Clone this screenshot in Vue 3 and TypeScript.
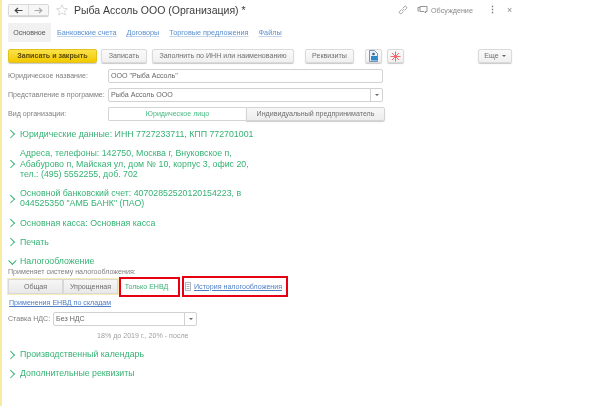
<script setup lang="ts">
const tabs: string[] = ['Банковские счета', 'Договоры', 'Торговые предложения', 'Файлы']
</script>

<template>
  <div class="page">
    <header class="head">
      <div class="nav">
        <span class="nav-btn"><svg width="9" height="7" viewBox="0 0 9 7"><path d="M8.500 3.500H1.500M4 1 1.200 3.500 4 6" fill="none" stroke="#444" stroke-width="1.200"/></svg></span>
        <span class="nav-btn"><svg width="9" height="7" viewBox="0 0 9 7"><path d="M.5 3.500h7M5 1l2.800 2.500L5 6" fill="none" stroke="#aaa" stroke-width="1.200"/></svg></span>
      </div>
      <svg class="star" width="12" height="12" viewBox="0 0 12 12"><path d="M6 .8 7.600 4.300 11.400 4.700 8.600 7.200 9.400 11 6 9.100 2.600 11 3.400 7.200.6 4.700 4.400 4.300Z" fill="#fff" stroke="#cfcfcf" stroke-width=".8"/></svg>
      <h1 class="title">Рыба Ассоль ООО (Организация) *</h1>
      <div class="head-tools">
        <svg width="10" height="10" viewBox="0 0 10 10"><path d="M4.200 5.800 5.800 4.200M3.500 4.500 1.700 6.300a1.400 1.400 0 0 0 2 2L5.500 6.500M4.500 3.500 6.300 1.700a1.400 1.400 0 0 1 2 2L6.500 5.500" fill="none" stroke="#999" stroke-width=".9"/></svg>
        <span class="discuss">
          <svg width="11" height="10" viewBox="0 0 11 10"><path d="M3 1.500h7v5H8.500V8L7 6.500H3Z" fill="#fff" stroke="#888" stroke-width=".9"/><path d="M3 2.500H1v3.500h1" fill="none" stroke="#888" stroke-width=".9"/></svg>
          Обсуждение
        </span>
        <span class="more-v">⋮</span>
        <span class="close">×</span>
      </div>
    </header>

    <nav class="tabs">
      <span class="tab active">Основное</span>
      <a v-for="t in tabs" :key="t" class="tab link">{{ t }}</a>
    </nav>

    <div class="toolbar">
      <button class="btn primary">Записать и закрыть</button>
      <button class="btn save">Записать</button>
      <button class="btn fill">Заполнить по ИНН или наименованию</button>
      <button class="btn req">Реквизиты</button>
      <button class="btn icon first-icon">
        <svg width="11" height="12" viewBox="0 0 11 12"><path d="M1.500.5h5l3 3v8h-8Z" fill="#e9f2fa" stroke="#5a7f9f" stroke-width=".8"/><rect x="3" y="6" width="6.500" height="4.500" fill="#2f88c8"/><circle cx="5.500" cy="4" r="1.300" fill="#34607f"/></svg>
      </button>
      <button class="btn icon second-icon">
        <svg width="11" height="11" viewBox="0 0 11 11"><path d="M5.500.5v10M.5 5.500h10M2 2l7 7M9 2l-7 7" stroke="#ee6a6a" stroke-width="1"/></svg>
      </button>
      <button class="btn more">Еще <i class="caret"></i></button>
    </div>

    <div class="row">
      <label>Юридическое название:</label>
      <div class="input wide">ООО "Рыба Ассоль"</div>
    </div>
    <div class="row">
      <label>Представление в программе:</label>
      <div class="input wide">Рыба Ассоль ООО<span class="drop"><i class="dot"></i></span></div>
    </div>
    <div class="row">
      <label>Вид организации:</label>
      <div class="toggle">
        <span class="opt on">Юридическое лицо</span>
        <span class="opt">Индивидуальный предприниматель</span>
      </div>
    </div>

    <section class="sections">
      <div class="sec"><i class="chev"></i><div>Юридические данные: ИНН 7727233711, КПП 772701001</div></div>
      <div class="sec"><i class="chev"></i><div>Адреса, телефоны: 142750, Москва г, Внуковское п,<br>Абабурово п, Майская ул, дом № 10, корпус 3, офис 20,<br>тел.: (495) 5552255, доб. 702</div></div>
      <div class="sec"><i class="chev"></i><div>Основной банковский счет: 40702852520120154223, в<br>044525350 "АМБ БАНК" (ПАО)</div></div>
      <div class="sec"><i class="chev"></i><div>Основная касса: Основная касса</div></div>
      <div class="sec"><i class="chev"></i><div>Печать</div></div>
      <div class="sec"><i class="chev down"></i><div>Налогообложение</div></div>
    </section>

    <div class="tax-label">Применяет систему налогообложения:</div>
    <div class="tax-row">
      <div class="tax-toggle">
        <span class="tax-opt">Общая</span>
        <span class="tax-opt">Упрощенная</span>
      </div>
      <span class="tax-sel">Только ЕНВД</span>
      <div class="history">
        <svg width="6" height="9" viewBox="0 0 6 9"><path d="M.5.500h5v8h-5ZM1.500 2.500h3M1.500 4.500h3M1.500 6.500h3" fill="#fff" stroke="#8a9aa8" stroke-width=".7"/></svg>
        <a class="hist-link">История налогообложения</a>
      </div>
    </div>
    <a class="envd">Применения ЕНВД по складам</a>
    <div class="vat">
      <label>Ставка НДС:</label>
      <div class="input vat-in">Без НДС<span class="drop"><i class="dot"></i></span></div>
    </div>
    <div class="note">18% до 2019 г., 20% - после</div>
    <div class="tails">
      <div class="sec"><i class="chev"></i><div>Производственный календарь</div></div>
      <div class="sec"><i class="chev"></i><div>Дополнительные реквизиты</div></div>
    </div>
  </div>
</template>

<style scoped>
.page {
  box-sizing: border-box;
  width: 600px;
  height: 406px;
  overflow: hidden;
  background: #fff;
  border-left: 2px solid #f7eda0;
  padding-left: 6px;
  font-family: "Liberation Sans", Arial, sans-serif;
  font-size: 7.100px;
  color: #666;
  filter: blur(0.4px);
}
.head { display: flex; align-items: center; height: 20px; }
.nav { box-sizing: border-box; display: flex; border: 1px solid #d8d8d8; border-radius: 2px; height: 12px; width: 41px; box-shadow: 0 1px 1px #ccc; }
.nav-btn { flex: 1; display: flex; align-items: center; justify-content: center; background: #f6f6f6; }
.nav-btn + .nav-btn { border-left: 1px solid #ddd; }
.star { margin-left: 7px; }
.title { flex: 0 0 324px; margin: 0 0 0 6px; font-size: 10.500px; font-weight: 400; color: #3b3b3b; white-space: nowrap; }
.head-tools { display: flex; align-items: center; color: #8a8a8a; }
.discuss { display: flex; align-items: center; gap: 3px; margin-left: 9px; font-size: 7.200px; }
.more-v { margin-left: 15px; font-size: 9px; font-weight: 700; color: #777; }
.close { margin-left: 10px; font-size: 9px; color: #888; }

.tabs { display: flex; align-items: stretch; height: 19px; margin-top: 3px; }
.tab { display: flex; align-items: center; }
.active { width: 43px; justify-content: center; background: #f1f1f1; color: #555; }
.link { color: #5a8fce; font-size: 7.300px; margin-left: 10px; text-decoration: underline; text-decoration-color: #c4d6ec; }
.active + .link { margin-left: 6px; }

.toolbar { display: flex; margin-top: 7px; height: 14px; }
.btn {
  box-sizing: border-box;
  height: 14px;
  padding: 0;
  border: 1px solid #dadada;
  border-radius: 2px;
  background: linear-gradient(#fafafa, #f0f0f0);
  box-shadow: 0 1px 1px #c9c9c9;
  font: 7.100px "Liberation Sans", Arial, sans-serif;
  color: #707070;
  white-space: nowrap;
}
.primary { width: 89px; font-weight: 700; font-size: 7.100px; background: linear-gradient(#fbe24a, #f3c900); border-color: #e3c21b; color: #5a4a00; }
.save { width: 46px; margin-left: 4px; }
.fill { width: 142px; margin-left: 5px; }
.req { width: 49px; margin-left: 11px; }
.icon { width: 17px; display: flex; align-items: center; justify-content: center; }
.first-icon { margin-left: 11px; }
.second-icon { margin-left: 5px; }
.more { margin-left: 74px; width: 34px; }
.caret { display: inline-block; border: 2px solid transparent; border-top: 2.500px solid #666; border-bottom: 0; vertical-align: 1px; margin-left: 1px; }

.row { display: flex; align-items: center; height: 14px; margin-top: 5px; }
.toolbar + .row { margin-top: 6px; }
.row label { width: 100px; color: #808080; white-space: nowrap; }
.input {
  box-sizing: border-box;
  height: 14px;
  border: 1px solid #d2d2d2;
  border-radius: 2px;
  padding-left: 2px;
  line-height: 12px;
  color: #666;
  position: relative;
  background: #fff;
}
.wide { width: 275px; }
.drop {
  position: absolute; right: 0; top: 0; bottom: 0; width: 11px;
  border-left: 1px solid #d2d2d2;
  display: flex; align-items: center; justify-content: center;
}
.dot { width: 0; height: 0; border: 2px solid transparent; border-top: 2px solid #666; border-bottom: 0; }
.toggle { display: flex; height: 14px; width: 277px; }
.opt {
  box-sizing: border-box; flex: 1; display: flex; align-items: center; justify-content: center;
  border: 1px solid #d4d4d4; background: linear-gradient(#f7f7f7, #ededed); color: #707070; border-radius: 0 2px 2px 0;
  box-shadow: 0 1px 1px #ccc; white-space: nowrap;
}
.opt.on { background: #fff; color: #44b980; border-radius: 2px 0 0 2px; border-right: 0; box-shadow: none; }

.sections { margin-top: 8px; display: flex; flex-direction: column; gap: 9px; }
.sec { display: flex; align-items: center; color: #36b274; font-size: 8.800px; line-height: 10.300px; white-space: nowrap; }
.chev {
  flex: none; box-sizing: border-box; width: 5.500px; height: 5.500px;
  margin: 0 6.250px 0 .25px;
  border-top: 1px solid #36b274; border-right: 1px solid #36b274;
  transform: rotate(45deg);
}
.chev.down { transform: rotate(135deg); margin-top: -2px; margin-left: 2px; margin-right: 4.500px; }

.tax-label { margin-top: 1.500px; color: #808080; line-height: 8px; }
.tax-row { display: flex; align-items: center; height: 21px; }
.tax-toggle { display: flex; height: 15px; box-shadow: 0 0 0 1px #f7ecb5; }
.tax-opt {
  box-sizing: border-box; display: flex; align-items: center; justify-content: center;
  width: 55px; background: linear-gradient(#f6f6f6, #e9e9e9); border: 1px solid #d8d8d8; color: #707070;
}
.tax-sel {
  box-sizing: border-box; width: 61px; height: 20px; margin-left: 1px; padding-right: 6px;
  display: flex; align-items: center; justify-content: center;
  background: #fff; color: #3cb277; border: 2.500px solid #e60012; white-space: nowrap;
}
.history {
  box-sizing: border-box; display: flex; align-items: center; gap: 3px; width: 106px; height: 21px;
  margin-left: 2px; padding-left: 1px;
  border: 2.500px solid #e60012; white-space: nowrap;
}
.hist-link { color: #4f80c6; text-decoration: underline; }
.envd { display: block; margin: 1px 0 0 1px; color: #4f80c6; text-decoration: underline; line-height: 10px; }
.vat { display: flex; align-items: center; margin-top: 4px; }
.vat label { width: 45px; color: #808080; white-space: nowrap; }
.vat-in { width: 144px; }
.note { margin: 5px 0 0 89px; color: #a0a0a0; line-height: 10px; }
.tails { margin-top: 8px; display: flex; flex-direction: column; gap: 8.700px; }
</style>
